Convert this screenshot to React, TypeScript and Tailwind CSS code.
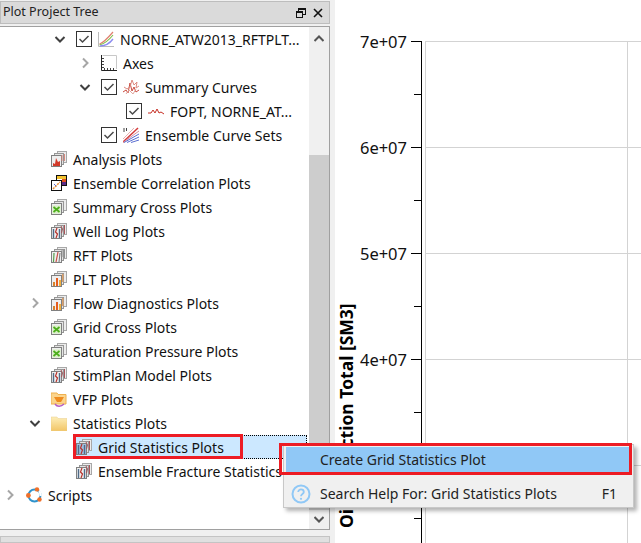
import type { ReactNode } from "react";

const uiFont = "font-['Noto_Sans',sans-serif]";

function Chevron({ open }: { open?: boolean }) {
  return (
    <svg width="12" height="12" viewBox="0 0 12 12" fill="none" stroke={open ? "#404040" : "#a6a6a6"} strokeWidth="2">
      {open ? <path d="M1.5 4 L6 8.5 L10.5 4" /> : <path d="M4 1.5 L8.5 6 L4 10.5" />}
    </svg>
  );
}

function Check() {
  return (
    <span className="mr-[6px] flex h-4 w-4 shrink-0 items-center justify-center border border-[#333] bg-white">
      <svg width="12" height="12" viewBox="0 0 12 12" fill="none" stroke="#4a4a4a" strokeWidth="1.5">
        <path d="M1.5 6 L4.5 9 L10.5 3" />
      </svg>
    </span>
  );
}

function Stack({ children }: { children: ReactNode }) {
  return (
    <svg width="16" height="16" viewBox="0 0 16 16" fill="none">
      <rect x="6.5" y="0.5" width="9" height="11" fill="#ececec" stroke="#a8a8a8" />
      <rect x="3.5" y="2.5" width="9" height="11" fill="#e4e4e4" stroke="#969696" />
      <rect x="0.5" y="4.5" width="10" height="11" fill="#efefef" stroke="#808080" />
      {children}
    </svg>
  );
}

const AnalysisIcon = () => (
  <Stack>
    <path d="M2 15 V12 L4 13 L5 7 L7 11 L9 10 V15 Z" fill="#d23a2a" />
    <path d="M11 4 V10 M13.5 3 V10" stroke="#d98a80" />
  </Stack>
);
const CrossIcon = () => (
  <Stack>
    <rect x="1.5" y="6.5" width="8" height="8" fill="#d8efc4" />
    <path d="M2.5 8 L8.5 13 M8.5 8 L2.5 13" stroke="#4cae1c" strokeWidth="1.7" />
  </Stack>
);
const WellIcon = ({ tint }: { tint?: boolean }) => (
  <Stack>
    {tint && <rect x="1" y="5" width="9" height="10" fill="#9fc0e0" />}
    <path d="M2.5 6 V15 M8.5 6 V15" stroke="#4f6b88" strokeWidth="1.4" />
    <path d="M6 5 L4.5 9 L6.5 11 L5 15" stroke="#b8332c" strokeWidth="1.2" />
    <path d="M10 3 L11.5 6 L10.5 10 M13.5 2 V11" stroke="#a8545a" />
  </Stack>
);
const RftIcon = () => (
  <Stack>
    <path d="M3 6 L2.5 15" stroke="#59a14f" strokeWidth="1.2" />
    <path d="M7 5 L5 15" stroke="#c94f47" strokeWidth="1.2" />
    <path d="M9 6 L8 15" stroke="#777" />
    <path d="M11 3 V10 M13.5 2 V11" stroke="#909090" />
  </Stack>
);
const PltIcon = () => (
  <Stack>
    <path d="M2 15 V11 H4 V15 Z" fill="#d9822b" />
    <path d="M5 15 V7 H7 V15 Z" fill="#e65d1f" />
    <path d="M8 15 V9 H10 V15 Z" fill="#f0b040" />
    <path d="M11 6 V3 H12.5 V11 H11 Z" fill="#dba06a" />
  </Stack>
);

const CurvesIcon = () => (
  <svg width="16" height="16" viewBox="0 0 16 16" fill="none">
    <path d="M0.5 1 V15.5 H16" stroke="#bbbbbb" />
    <path d="M1.5 13 C5 12 9 8 15 1" stroke="#e0806f" strokeWidth="1.2" />
    <path d="M1.5 14 C6 13 11 9 15 4" stroke="#82c050" strokeWidth="1.2" />
    <path d="M2 15 C7 15 12 12 15 8" stroke="#8c8cf0" strokeWidth="1.4" />
  </svg>
);
const AxesIcon = () => (
  <svg width="16" height="16" viewBox="0 0 16 16" fill="none">
    <path d="M1.5 0.5 H15.5 V14" stroke="#c8c8c8" />
    <path d="M0.5 0 V15.5 H16" stroke="#222" />
    <path d="M3.5 13 V15 M6.5 13 V15 M9.5 13 V15 M12.5 13 V15 M1 3.5 H3 M1 6.5 H3 M1 9.5 H3 M1 12.5 H3" stroke="#444" />
  </svg>
);
const SummaryIcon = () => (
  <svg width="16" height="16" viewBox="0 0 16 16" fill="none" stroke="#c9483c">
    <path d="M0 13 L3 11 L5 14 L7 4 L9 12 L11 8 L13 13 L16 11" />
    <path d="M1 8 L4 10 L7 8 L9 1 L11 6 L14 3 L13 9 L16 7" stroke="#dc8a80" />
    <path d="M3 15 L6 11 L10 15 L13 10" stroke="#e2a8a0" />
  </svg>
);
const SingleCurveIcon = () => (
  <svg width="16" height="16" viewBox="0 0 16 16" fill="none" stroke="#c62f25">
    <path d="M0 10 H3 L5 7 L7 10 L9 6 L11 10 L13 9 L16 11" />
  </svg>
);
const EnsembleSetIcon = () => (
  <svg width="16" height="16" viewBox="0 0 16 16" fill="none">
    <path d="M1 1 V5 M3.5 1 V4" stroke="#444" />
    <path d="M0 15 L15 1" stroke="#d33a3a" strokeWidth="1.5" />
    <path d="M0 15.5 L16 4" stroke="#d88a9a" />
    <path d="M1 15.5 L16 7 M4 15.5 L16 10 M8 15.5 L16 13" stroke="#5a6ed0" />
    <path d="M0 12 L11 1" stroke="#e6b0b0" />
  </svg>
);
const CorrelationIcon = () => (
  <svg width="16" height="16" viewBox="0 0 16 16" fill="none">
    <rect x="5.5" y="0.5" width="10" height="10" fill="#fff" stroke="#111" />
    <rect x="6" y="1" width="9" height="3" fill="#f2c230" />
    <rect x="11" y="4" width="4" height="3" fill="#e0501e" />
    <rect x="11" y="7" width="4" height="3" fill="#5b2a86" />
    <rect x="0.5" y="5.5" width="10" height="10" fill="#fff" stroke="#111" />
    <path d="M2 14 L9 7" stroke="#e88a30" strokeWidth="1.5" strokeDasharray="2 1" />
    <path d="M3 9 L5 11" stroke="#5a6ed0" />
  </svg>
);
const FolderIcon = () => (
  <svg width="16" height="16" viewBox="0 0 16 16">
    <defs>
      <linearGradient id="folder" x1="0" y1="0" x2="0" y2="1">
        <stop offset="0" stopColor="#fdeeb8" />
        <stop offset="1" stopColor="#f2c566" />
      </linearGradient>
    </defs>
    <path d="M0 2 H6 L7 3.5 H16 V16 H0 Z" fill="url(#folder)" stroke="#e8cc8a" strokeWidth="0.5" />
  </svg>
);
const VfpIcon = () => (
  <svg width="16" height="16" viewBox="0 0 16 16" fill="none">
    <path d="M0 2 H6 L7 3.5 H15 V13 H0 Z" fill="#fbd48c" stroke="#eeb04e" />
    <path d="M3 6 H13 L10 11 H6 Z" fill="#ef8a1e" />
    <path d="M4 13 C6 16 10 16 13 13" stroke="#b45cc4" strokeWidth="1.4" />
  </svg>
);
const ScriptsIcon = () => (
  <svg width="16" height="16" viewBox="0 0 16 16" fill="none">
    <circle cx="8.5" cy="8.5" r="6" stroke="#2f93cc" strokeWidth="2" />
    <path d="M13 4 A6 6 0 0 1 14.5 9" stroke="#ffffff" strokeWidth="2.4" />
    <circle cx="11" cy="2.4" r="2.2" fill="#f0702a" />
    <circle cx="2.4" cy="8.5" r="2.4" fill="#f0702a" />
    <circle cx="13.5" cy="12.5" r="2.2" fill="#f0702a" />
  </svg>
);

type Row = {
  indent: string;
  label: string;
  icon: ReactNode;
  arrow?: "open" | "closed";
  checked?: boolean;
  selected?: boolean;
};

const rows: Row[] = [
  { indent: "pl-[50px]", label: "NORNE_ATW2013_RFTPLT...", icon: <CurvesIcon />, arrow: "open", checked: true },
  { indent: "pl-[75px]", label: "Axes", icon: <AxesIcon />, arrow: "closed" },
  { indent: "pl-[75px]", label: "Summary Curves", icon: <SummaryIcon />, arrow: "open", checked: true },
  { indent: "pl-[100px]", label: "FOPT, NORNE_AT...", icon: <SingleCurveIcon />, checked: true },
  { indent: "pl-[75px]", label: "Ensemble Curve Sets", icon: <EnsembleSetIcon />, checked: true },
  { indent: "pl-[25px]", label: "Analysis Plots", icon: <AnalysisIcon /> },
  { indent: "pl-[25px]", label: "Ensemble Correlation Plots", icon: <CorrelationIcon /> },
  { indent: "pl-[25px]", label: "Summary Cross Plots", icon: <CrossIcon /> },
  { indent: "pl-[25px]", label: "Well Log Plots", icon: <WellIcon /> },
  { indent: "pl-[25px]", label: "RFT Plots", icon: <RftIcon /> },
  { indent: "pl-[25px]", label: "PLT Plots", icon: <PltIcon /> },
  { indent: "pl-[25px]", label: "Flow Diagnostics Plots", icon: <PltIcon />, arrow: "closed" },
  { indent: "pl-[25px]", label: "Grid Cross Plots", icon: <CrossIcon /> },
  { indent: "pl-[25px]", label: "Saturation Pressure Plots", icon: <CrossIcon /> },
  { indent: "pl-[25px]", label: "StimPlan Model Plots", icon: <WellIcon /> },
  { indent: "pl-[25px]", label: "VFP Plots", icon: <VfpIcon /> },
  { indent: "pl-[25px]", label: "Statistics Plots", icon: <FolderIcon />, arrow: "open" },
  { indent: "pl-[50px]", label: "Grid Statistics Plots", icon: <WellIcon tint />, selected: true },
  { indent: "pl-[50px]", label: "Ensemble Fracture Statistics Plots", icon: <WellIcon /> },
  { indent: "pl-0", label: "Scripts", icon: <ScriptsIcon />, arrow: "closed" },
];

function TreeRow({ row }: { row: Row }) {
  const content = (
    <>
      {row.checked && <Check />}
      <span className="mr-[6px] h-4 w-4 shrink-0">{row.icon}</span>
      <span className="whitespace-nowrap">{row.label}</span>
    </>
  );
  return (
    <div className={`flex h-6 shrink-0 items-center ${row.indent}`}>
      <span className="flex h-4 w-[26px] shrink-0 items-center pl-1">
        {row.arrow && <Chevron open={row.arrow === "open"} />}
      </span>
      {row.selected ? (
        <span className="mr-[2px] flex h-full flex-1 items-center border-y border-r border-dotted border-black bg-[#cce8ff]">
          {content}
        </span>
      ) : (
        content
      )}
    </div>
  );
}

function Chart() {
  const major = [41, 147, 253, 359, 465];
  const labels = ["7e+07", "6e+07", "5e+07", "4e+07"];
  return (
    <svg width="306" height="543" viewBox="335 0 306 543" className="block bg-white">
      {major.map((y) => (
        <path key={y} d={`M425 ${y + 0.5} H641`} stroke="#d3d3d3" />
      ))}
      {major.map((y) => (
        <path key={`t${y}`} d={`M411 ${y + 0.5} H421 M414 ${y + 53.5} H421`} stroke="#000" />
      ))}
      <path d="M421.5 41 V543" stroke="#000" />
      <path d="M425.5 41 V543 M627.5 41 V543" stroke="#d3d3d3" />
      {labels.map((l, i) => (
        <text key={l} x="407" y={major[i] + 7} textAnchor="end" fontSize="16.5" fontFamily="Noto Sans, sans-serif" fill="#111">
          {l}
        </text>
      ))}
      <text
        transform="translate(353 528) rotate(-90)"
        fontSize="17.5"
        fontWeight="700"
        fontFamily="Noto Sans, sans-serif"
        fill="#000"
      >
        Oil Production Total [SM3]
      </text>
    </svg>
  );
}

export default function App() {
  return (
    <div className={`relative flex h-[543px] w-[641px] overflow-hidden bg-[#f0f0f0] text-[14px] text-[#111] ${uiFont}`}>
      <div className="flex w-[330px] shrink-0 flex-col pt-px">
        <div className="flex h-[23px] items-center justify-between border border-[#bdbdbd] bg-[#dadada] pl-[2px] pr-[6px] text-[#222]">
          <span className="text-[12.5px]">Plot Project Tree</span>
          <span className="flex items-center gap-[7px]">
            <svg width="10" height="10" viewBox="0 0 10 10" fill="none" stroke="#111">
              <rect x="2.5" y="0.5" width="7" height="6" />
              <path d="M2.5 1.5 H9.5" />
              <rect x="0.5" y="3.5" width="6" height="6" fill="#dadada" />
              <path d="M0.5 4.5 H6.5" />
            </svg>
            <svg width="10" height="10" viewBox="0 0 10 10" fill="none" stroke="#111" strokeWidth="1.6">
              <path d="M1 1 L9 9 M9 1 L1 9" />
            </svg>
          </span>
        </div>
        <div className="mt-[2px] flex h-[504px] border border-l-0 border-[#a0a0a0] bg-white">
          <div className="flex min-w-0 flex-1 flex-col overflow-hidden">
            {rows.map((row) => (
              <TreeRow key={row.label} row={row} />
            ))}
          </div>
          <div className="flex w-5 shrink-0 flex-col items-center bg-[#f0f0f0]">
            <div className="flex h-[22px] items-center">
              <svg width="10" height="7" viewBox="0 0 10 7" fill="none" stroke="#555" strokeWidth="2">
                <path d="M0.5 6 L5 1.5 L9.5 6" />
              </svg>
            </div>
            <div className="mt-[106px] h-[355px] w-full bg-[#cdcdcd]" />
            <div className="flex flex-1 items-center">
              <svg width="10" height="7" viewBox="0 0 10 7" fill="none" stroke="#555" strokeWidth="2">
                <path d="M0.5 1 L5 5.5 L9.5 1" />
              </svg>
            </div>
          </div>
        </div>
        <div className="mt-[6px] flex-1 border border-[#c4c4c4] bg-[#e0e0e0]" />
      </div>
      <div className="ml-[5px] flex-1">
        <Chart />
      </div>

      {/* red annotation around the selected item */}
      <div className="absolute left-[73px] top-[434px] h-[25px] w-[170px] border-[3px] border-[#ed1c24]" />

      <div className="absolute left-[283px] top-[444px] h-[64px] w-[351px] border border-[#c8c8c8] bg-[#f0f0f0] pl-[2px] pr-[3px] pt-[2px] shadow-[3px_3px_4px_rgba(0,0,0,0.3)]">
        <div className="flex h-[25px] items-center bg-[#90c8f6] pl-[34px] text-[#222]">Create Grid Statistics Plot</div>
        <div className="mt-[9px] flex h-[25px] items-center text-[#222]">
          <span className="ml-[4px] mr-[9px] flex h-[21px] w-[21px] items-center justify-center">
            <svg width="20" height="20" viewBox="0 0 20 20" fill="none">
              <circle cx="10" cy="10" r="8.5" stroke="#90c8f6" strokeWidth="2" />
              <path d="M7.2 8 C7.2 4.6 12.8 4.6 12.8 8 C12.8 10 10 10 10 12.2" stroke="#90c8f6" strokeWidth="1.8" />
              <circle cx="10" cy="14.8" r="1.1" fill="#90c8f6" />
            </svg>
          </span>
          <span className="flex-1">Search Help For: Grid Statistics Plots</span>
          <span className="mr-[13px]">F1</span>
        </div>
      </div>
      <div className="absolute left-[279px] top-[443px] h-[32px] w-[353px] border-[3px] border-[#ed1c24]" />
    </div>
  );
}
